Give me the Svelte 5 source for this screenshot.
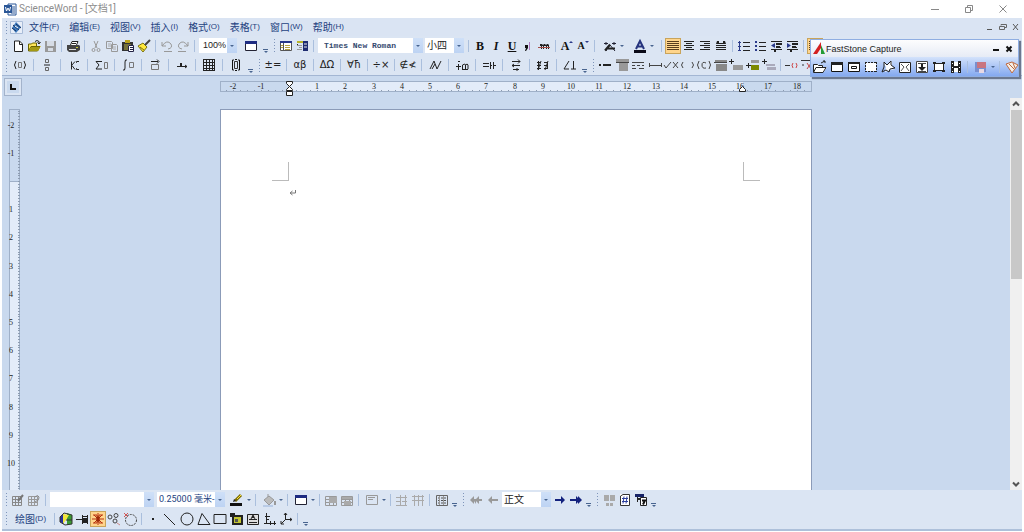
<script>
  const line = (d, c = "#222", w = 1) => `<path d="${d}" fill="none" stroke="${c}" stroke-width="${w}"/>`;
  const fill = (d, c = "#222") => `<path d="${d}" fill="${c}"/>`;
  const rows = (c, list) => list.map(([x, y, w]) => fill(`M${x} ${y}h${w}v1h-${w}z`, c)).join("");

  // 16x16 drawings, keyed by command name
  const icons = {
    new: fill("M4 3h6l3 3v8H4z", "#fff") + line("M4.500 3v10.500h8V6L9.500 3zM9.500 3v3.500h3"),
    open: fill("M2 13V6h3l1-1h5v3h4l-3 5z", "#ffe65a") + line("M2.500 13V6h3l1 -1h4v3M2.500 13L5 8.500h9L11.500 13z", "#6b6400") + fill("M3 13l2-4h9l-2 4z", "#a49a12") + line("M9 3.500q2-2 4 0v2M11.500 4.500l1.500 1.500L14.500 4", "#222"),
    save: fill("M3 3h11v11H3z", "#999") + fill("M5 3h7v5H5zM6 10h5v3H6z", "#d6dce5"),
    print: fill("M5 7l2-4h6l-1 4z", "#fff") + line("M5.500 7L7 3.500h6L11.500 7M7 5.500h4") + fill("M2 7h12l1 1v4l-3 2H4l-2-2z", "#444") + fill("M4 11h7v1H4z", "#ddd") + fill("M11 9h2v1h-2z", "#cc3"),
    cut: line("M6 3l3 7M10 3L7 10", "#999") + '<circle cx="5.500" cy="12" r="1.500" fill="none" stroke="#999"/><circle cx="10.500" cy="12" r="1.500" fill="none" stroke="#999"/>',
    copy: line("M2.500 3.500h5l1 1v6h-6zM7.500 6.500h5l1 1v6h-6z", "#999") + line("M4 6h3M4 8h3M9 9h3M9 11h3", "#aaa"),
    paste: fill("M2 4h11v9H2z", "#333") + fill("M5 2h5v3H5z", "#b9a31c") + fill("M4 6h7v6H4z", "#77733a") + fill("M8 7h6v7H8z", "#fff") + line("M8.500 7.500h5v6h-5zM10 9.500h3M10 11.500h3", "#224"),
    brush: fill("M2 8l5-3 4 4-4 5z", "#ffe83b") + line("M2 8l5-3 4 4-4 5zM4 9l4 3", "#7a7210") + line("M9 7l5-5", "#444", 2),
    undo: line("M3 4v4h4M3 8q5-7 9-2q2 4-3 5M5 13.500h8", "#999"),
    redo: line("M13 4v4H9M13 8Q8 1 4 6q-2 4 3 5M3 13.500h8", "#999"),
    table: fill("M2 3h12v10H2z", "#fff") + line("M2.500 3.500h11v9h-11z", "#223") + fill("M2 3h12v3H2z", "#1e2c82"),
    panel: fill("M2 3h12v10H2z", "#fff") + line("M2.500 3.500h11v9h-11z", "#555") + fill("M2 3h12v2H2z", "#26368a") + line("M5.500 5v8", "#555") + line("M3 7.500h2M3 9.500h2M7 7.500h5M7 9.500h5M7 11.500h5", "#b7a13e"),
    book: fill("M9 3h5v10H9z", "#1e2c70") + fill("M3 3h6v2H3z", "#b9b52c") + line("M10 6h3M10 9h3", "#eee") + line("M3 7.500h5M5 9.500h3M3 11.500h5", "#999") + fill("M3 6h1v1H3z"),
    strike: fill("M4 6h2l1 1 1-1h1l1 1 1-1h1l1 1v4h-1V8h-1v3h-1V8H8v3H7V8H6v3H5V8H4z") + line("M2 9.500h12", "#a65048"),
    comma: fill("M5 7h3v3l-2 3H5l1-3H5z", "#111") + line("M9.500 4v8", "#b07ac0"),
    effects: line("M4 13L8 7l5 6M2 5.500h4M4 4v3M10 5.500h4M12 4v3", "#223") + line("M3 12.500l5-6M6 10.500h7", "#222", 2),
    color: fill("M2 12h12v3H2z", "#0a0a18") + line("M4 11L8 3l4 8M6 8.500h5", "#26347e", 2),
    left: rows("#5a3d1d", [[2, 3, 12], [2, 5, 12], [2, 7, 12], [2, 9, 12], [2, 11, 12]]),
    center: rows("#222", [[3, 3, 10], [5, 5, 6], [3, 7, 10], [5, 9, 6], [3, 11, 10]]),
    right: rows("#222", [[3, 3, 10], [7, 5, 6], [3, 7, 10], [7, 9, 6], [3, 11, 10]]),
    spread: fill("M4 3h2v2h4V3h2l1 3H3z") + rows("#222", [[3, 7, 10], [3, 9, 10], [3, 11, 10]]),
    numlist: fill("M3 3h1v10H3zM2 4h3v1H2zM2 8h3v1H2zM2 12h3v1H2z", "#2a3a8a") + rows("#222", [[7, 4, 7], [7, 8, 7], [7, 12, 7]]),
    bullets: fill("M3 3h2v2H3zM3 7h2v2H3zM3 11h2v2H3z", "#2a3a8a") + rows("#222", [[7, 4, 7], [7, 8, 7], [7, 12, 7]]),
    outdent: rows("#222", [[3, 3, 11], [8, 5, 6], [8, 6, 6], [8, 8, 4], [8, 9, 5], [3, 11, 11]]) + fill("M7 5v5L3 7.500z", "#2a3a8a") + fill("M6 12h2v2H6z"),
    indent: rows("#222", [[3, 3, 11], [8, 5, 6], [8, 6, 6], [8, 8, 4], [8, 9, 5], [3, 11, 11]]) + fill("M3 5v5l4-2.500z", "#2a3a8a") + fill("M6 12h2v2H6z"),
    paren: line("M4 4q-3 4 0 8M12 4q3 4 0 8") + line("M6.500 5.500h3v5h-3z", "#777"),
    frac: line("M6.500 2.500h3v3h-3zM6.500 10.500h3v3h-3z", "#666") + line("M5 8h6", "#222"),
    script: line("M5.500 4.500v8M5.500 8.500L9 4.500M6 8.500l3 4M11 4.500h2M11 12.500h2", "#222") + line("M10.500 4v2M10.500 11v2", "#555"),
    sum: line("M9 4.500H3L6 8 3 12h6", "#222") + line("M11.500 5.500h3v6h-3z", "#777"),
    integral: line("M7 3Q5 2 5 5v6q0 3-2 2") + line("M9.500 5.500h4v5h-4z", "#777"),
    vector: line("M4 4.500h7M10 2.500l2 2-2 2") + line("M4.500 7.500h7v5h-7z", "#777"),
    arrow: line("M3 9.500h10M11 8l2 1.500L11 11", "#222") + fill("M6 6h2v3H6z"),
    matrix: line("M2.500 2v12M5.500 2v12M8.500 2v12M11.500 2v12M13.500 2v12M2 2.500h12M2 5.500h12M2 8.500h12M2 11.500h12M2 13.500h12", "#222"),
    bracket: line("M6 3H4.500v10H6M10 3h1.500v10H10", "#111") + line("M6.500 4.500h3v7h-3z", "#333") + line("M7 2.500h2M7 13.500h2", "#111"),
    wave: line("M3 12L7 4M7 4l3 8 4-8M5 12l3-5"),
    dotplus: line("M2 9.500h5M4.500 7v6M8.500 12V8q3-2 3 0v4M11.500 8q2-2 2.500 0v4M8 12.500h6") + fill("M4 4h2v1H4z"),
    relate: line("M2 6.500h6M2 9.500h6M9.500 5v7M12.500 5v7M12 8.500h3M9 8.500h2"),
    turn: line("M4 4.500h8M10 2.500l2 2-2 2M4 8.500h8M6 7L4 8.500 6 10M5 12.500h6M9 11v3"),
    negate: line("M2 5.500h4M2 8.500h4M2 11.500h4M3.500 4v9M6 4l-3 9M9 5.500h4M9 8.500h4M9 11.500h4M12.500 5v7M13 4l-3 9"),
    angle: line("M7 4L2 12h5M11.500 4v8M9 12h5"),
    dot1: fill("M2 7h2v2H2zM6 7h8v2H6z"),
    lines1: fill("M2 2h13v3H2zM5 6h9v8H5z", "#999") + line("M2 5.500h13", "#444"),
    dashes: line("M2 5.500h12M2 8.500h3M7 8.500h3M12 8.500h2M2 11.500h4M9 11.500h5", "#444"),
    ruleh: line("M2.500 6v4M14.500 6v4M3 8.500h11", "#444"),
    checkx: line("M1 8l2 3 5-6M10 5l5 6M15 5l-5 6", "#444"),
    gap: line("M4 5q-3 3 0 6M13 5q3 3 0 6", "#444"),
    gapc: line("M3 4q-3 4 0 8M13 4q3 4 0 8M10 6Q6 4 6 8t4 3", "#444"),
    block: fill("M3 3h12v2H3zM4 7h11v7H4z", "#888") + line("M2 5.500h13", "#444"),
    plus1: fill("M5 8h10v5H5z", "#999") + line("M1 4.500h5M3.500 2v5"),
    plus2: fill("M6 3h8v3H6z", "#999") + fill("M6 8h8v5H6z", "#7d8a00") + line("M1 8.500h5M3.500 6v5"),
    plus3: fill("M5 7h9v2H5zM6 10h9v3H6z", "#aab") + line("M1 4.500h5M3.500 2v5"),
    minus: line("M1 8.500h5", "#333") + line("M9 6q-2 2 0 5M12 6q2 2 0 5", "#c44"),
    formula: line("M1 3.500h13M2 8h2", "#333") + line("M7 6l4 6M11 6l-4 6", "#c24a4a"),
    sheet: line("M2.500 4.500h9v9h-9zM2 7.500h10M2 10.500h10M5.500 4v10M8.500 4v10", "#888") + line("M8 9l5-6", "#777", 2),
    sheet2: line("M2.500 4.500h9v9h-9zM2 7.500h10M2 10.500h10M5.500 4v10M8.500 4v10", "#999") + line("M9 5q3-3 4 0t-4 5", "#888"),
    pen: fill("M1 11h12v3H1z", "#111") + line("M6 9l6-6", "#7a6b00", 3) + line("M8 7l4-4", "#ffe23b", 1) + fill("M4 10l1-3 2 2z"),
    bucket: fill("M3 8l5-4 5 4-5 5z", "#bbb") + line("M3 8l5-4 5 4-5 5zM7 5V2", "#999") + fill("M13 9h2v4h-2z", "#999") + fill("M2 13h10v2H2z", "#b9cbe6"),
    grid1: line("M2.500 4.500h11v9h-11zM2 7.500h12M2 10.500h12M6.500 4v10M10.500 4v10", "#999") + fill("M6 5h8v6H6z", "#aaa"),
    grid2: line("M2.500 4.500h11v9h-11zM2 7.500h12M2 10.500h12M6.500 4v10M10.500 4v10", "#999") + fill("M3 5h10v2H3zM5 9h7v4H5z", "#aaa"),
    frame: line("M2.500 3.500h11v9h-11z", "#999") + line("M4 5.500h7M4 7.500h5", "#999"),
    split: line("M2 5.500h11M2 9.500h4M8 9.500h5M2 13.500h11M6.500 3v11M11.500 3v11", "#aaa"),
    split2: line("M2 4.500h12M2 8.500h12M4.500 3v11M8.500 3v11M12.500 3v11", "#aaa"),
    dotgrid: line("M2.500 3.500h11v10h-11z", "#666") + '<path d="M4 6h9M4 8.500h9M4 11h9" stroke="#555" stroke-dasharray="2 1"/>' + line("M5.500 4v9M9.500 4v9", "#999"),
    back2: fill("M2 8l4-4v3h2V4L8 7l3-3v3h3v2h-3v3L8 9v3L6 9v3z", "#999"),
    back1: fill("M3 8l4-4v3h6v2H7v3z", "#999"),
    next1: fill("M13 8L9 4v3H3v2h6v3z", "#14227e"),
    next2: fill("M14 8l-4-4v2L8 4v3H2v2h6v3l2-2v2z", "#14227e"),
    link: fill("M3 3h5v6H3zM9 3h5v6H9zM5 11h3v3H5zM9 11h3v3H9z", "#aaa"),
    hash: fill("M3 2h8l2 2v10H3z", "#fff") + line("M3.500 4L6 2.500h6.500v11h-9z", "#333") + line("M5 6.500h6M5 9.500h6M7 4.500l-1 7M10 4.500l-1 7", "#2c3f9e"),
    order: fill("M2 2h9v3H2z", "#152266") + fill("M7 5h7v9H7z", "#fff") + line("M7.500 5.500h6v8h-6zM4.500 5v5") + line("M9 8.500h3l-2 4", "#111", 2) + fill("M5 6h3v2H5z"),
    tile: fill("M2 6l4-4v11l-4-2z", "#28309b") + fill("M9 2l5 2v9l-5 1z", "#3b9a32") + fill("M5 3l6 1-3 5-3 4z", "#f3e73a") + line("M2 6l4-4 8 2v9l-7 1-5-3zM8 9h6", "#333"),
    anchor: line("M2 8.500h6M8.500 4v9M9 5.500h4M9 11.500h4M13.500 4v9", "#222") + fill("M9 7h5v4H9z", "#222"),
    snap: line("M8 2v12M2 8h12M3 4h4v3M13 4H9v3M3 12h4V9M13 12H9V9M4 4l8 8M12 4l-8 8", "#b8330f") + line("M7 6h2v4H7z", "#8c1c00"),
    nodes: '<g fill="none" stroke="#444"><circle cx="4" cy="6" r="2"/><circle cx="10" cy="4.500" r="2"/><circle cx="9" cy="10" r="2"/></g>' + line("M11 12l3 2", "#c88"),
    rotate: '<circle cx="9" cy="9" r="5.500" fill="none" stroke="#444" stroke-dasharray="2 1"/>' + line("M2 2l4 4M6 2L2 6", "#c55"),
    point: fill("M7 7h2v2H7z"),
    line: line("M2 3l11 11"),
    circle: '<circle cx="8" cy="8" r="6" fill="none" stroke="#222"/>',
    triangle: line("M6 2.500L2 13.500h12z"),
    rect: line("M2 3.500h12v9H2z"),
    picture: fill("M3 4h11v10H3z") + fill("M5 6h7v6H5z", "#c2c531") + fill("M6 8h3v3H6z", "#555") + fill("M1 2h5v3H4v1H1z"),
    text: fill("M2 3h12v11H2z", "#ddd") + line("M2.500 3.500h11v10h-11zM4 8.500h8M4 11.500h8M6 8l2-4 2 4") + fill("M7 5h2v2H7z"),
    axis: line("M4.500 2v11M2 12.500h12M3 5.500h5M4 8.500h3M8.500 10v4M12.500 10v4"),
    axis3: line("M7.500 2v7M7 8.500h7M7.500 8.500L3 13M6 4l1.500-2L9 4M12 7l2 1.500-2 1.500M3 10v3h3"),
    // capture bar
    capopen: fill("M2 13V5h4l1 1h4v2h4l-3 5z", "#fff") + line("M1.500 13V5.500h4l1 1h4V8M1.500 13.500L4 8.500h10l-3 5zM9 4l4-2M11 2h2v2"),
    capwin: fill("M2 3h12v10H2z", "#fff") + line("M2.500 3.500h11v9h-11zM2 5h12", "#111") + fill("M2 3h12v3H2z"),
    capobj: fill("M2 3h12v10H2z", "#fff") + line("M2.500 3.500h11v9h-11zM5.500 7.500h5v2h-5z", "#111") + fill("M2 3h12v2H2z"),
    caprect: fill("M3 4h10v8H3z", "#fff") + '<path d="M2 3.500h12M2 12.500h12M2.500 3v10M13.500 3v10" fill="none" stroke="#222" stroke-dasharray="2 1"/>',
    capfree: fill("M3 3l4 3 5-4v5l3 3-5 1-5 2 1-5z", "#fff") + line("M4 3l3 3 4-4v4l4 3-5 1-1 3-3-2-4 2 2-5z"),
    capfull: fill("M2 3h12v11H2z", "#fff") + line("M2.500 3.500h11v10h-11z") + line("M4 5l3 3-3 4M12 5L9 8l3 4", "#555"),
    capscroll: fill("M2 2h12v12H2z", "#fff") + line("M2.500 2.500h11v11h-11zM4 4.500h8M4 12.500h8", "#444") + fill("M7 5h2v3h3l-4 4-4-4h3z"),
    capfix: fill("M4 5h8v6H4z", "#fff") + line("M3.500 4.500h9v7h-9z", "#222") + fill("M2 3h3v2H2zM11 3h3v2h-3zM2 11h3v2H2zM11 11h3v2h-3z"),
    capfilm: fill("M3 2h3v12H3zM10 2h3v12h-3zM6 7h4v2H6z") + fill("M6 3h4v4H6zM6 9h4v4H6zM4 4h1v1H4zM4 8h1v1H4zM4 12h1v1H4zM11 4h1v1h-1zM11 8h1v1h-1zM11 12h1v1h-1z", "#fff"),
    capsave: fill("M2 3h11v10H2z", "#7a8fce") + fill("M4 3h9v6H4z", "#c97580") + fill("M6 10h5v4H6z", "#e8d9e4"),
    capset: fill("M2 5l6-2 6 3-6 8z", "#f4efe9") + line("M2 5l6-2 6 3-6 8zM5 5l5 5M9 4l2 5", "#c0683c")
  };

  // commands drawn with characters instead of a picture
  const glyphs = {
    bold: "B", italic: "I", underline: "U", grow: "A", shrink: "A",
    plusminus: "±=", greek: "αβ", greekcap: "ΔΩ", forall: "∀ħ", divide: "÷×", notin: "∉≮"
  };

  const combos = {
    zoom: { label: "显示比例", width: 38, value: "100%" },
    font: { label: "字体", width: 105, value: "Times New Roman" },
    size: { label: "字号", width: 39, value: "小四" },
    style: { label: "线型", width: 104, value: "" },
    weight: { label: "线宽", width: 68, value: "0.25000 毫米-" },
    part: { label: "样式", width: 49, value: "正文" }
  };

  // "|" separator, ":" grip, "v" overflow mark, "$" combo box,
  // "+" drop-down arrow, "=" roomy drop-down, "*" pressed, "~" wide cell, "^" equation cell
  const parse = (text) =>
    text.split(" ").map((token) => ({
      token,
      name: token.replace(/[$+=*~^]/g, ""),
      combo: token[0] === "$",
      drop: /[+=]/.test(token),
      roomy: token.includes("="),
      active: token.includes("*"),
      mid: token.includes("~"),
      wide: token.includes("^")
    }));

  const standard = parse(": new open save | print | cut copy paste brush | undo redo | $zoom table^ v : panel book | $font $size | bold italic underline comma strike | grow shrink | effects= color= | left* center right spread | numlist bullets outdent indent | left*");
  const equation = parse(": paren^ | frac^ | script^ | sum^ | integral^ | vector^ | arrow^ | matrix^ | bracket^ v : plusminus^ | greek^ | greekcap^ | forall^ | divide^ | notin^ | wave^ | dotplus^ | relate^ | turn^ | negate^ | angle^ v : dot1 lines1~ dashes ruleh~ checkx gap gapc~ block plus1 plus2~ plus3 | minus formula");
  const tables = parse(": sheet sheet2 | $style $weight pen+ | bucket+ | table+ | grid1 grid2 | frame+ | split split2 | dotgrid~ v : back2~ back1~ $part next1 next2 v : link hash order v");
  const drawing = parse("| tile anchor snap* nodes rotate | point line~ circle~ triangle~ rect picture~ text axis~ axis3 | v");
  const capture = parse("capopen~ capwin~ capobj~ caprect~ capfree~ capfull~ capscroll~ capfix~ capfilm~ | capsave+ | capset~");

  const menus = [
    ["文件", "F"], ["编辑", "E"], ["视图", "V"], ["插入", "I"],
    ["格式", "O"], ["表格", "T"], ["窗口", "W"], ["帮助", "H"]
  ];

  let winHeight = $state(532);

  // rulers: one centimetre, in pixels
  const CM = 28.2;
  const at = (n, margin) => Math.round(margin + n * CM);
  const range = (from, count) => Array.from({ length: count }, (_, i) => from + i);

  const hMarks = range(-2, 21).filter((n) => n !== 0);
  const hTicks = range(-9, 83).map((n) => n / 4);
  // the vertical scale numbers only what fits above the footer
  let vLength = $derived(Math.max(winHeight - 151, 80));
  let vMarks = $derived(range(-2, 60).filter((n) => n !== 0 && at(n, 72) < vLength - 6));
  let vTicks = $derived(range(-25, 600).map((n) => n / 10).filter((n) => at(n, 72) < vLength));
</script>

<svelte:window bind:innerHeight={winHeight} />

{#snippet bar(items)}
  {#each items as item}
    {#if item.token === "|"}
      <span class="sep"></span>
    {:else if item.token === ":"}
      <span class="grip"></span>
    {:else if item.token === "v"}
      <button class="more" aria-label="更多"><i></i><b class="tri"></b></button>
    {:else if item.combo}
      <span class="combo {item.name}" style:width="{combos[item.name].width}px">
        <select aria-label={combos[item.name].label}>
          <option>{combos[item.name].value}</option>
        </select>
        <b class="tri"></b>
      </span>
    {:else}
      <button
        class="tool"
        class:drop={item.drop}
        class:roomy={item.roomy}
        class:active={item.active}
        class:mid={item.mid}
        class:wide={item.wide}
        aria-label={item.name}
      >
        {#if glyphs[item.name]}
          <span class="glyph {item.name}">{glyphs[item.name]}</span>
        {:else}
          <svg width="16" height="16" viewBox="0 0 16 16">{@html icons[item.name]}</svg>
        {/if}
        {#if item.drop}<b class="tri"></b>{/if}
      </button>
    {/if}
  {/each}
{/snippet}

<div class="app">
  <header class="title">
    <svg width="13" height="13" viewBox="0 0 13 13">
      <path d="M4 1h8v11H4z" fill="#fff" stroke="#2b5797" />
      <path d="M7 4h4M7 6h4M7 8h4M7 10h4" stroke="#2b5797" />
      <path d="M0 2h8v8H0z" fill="#2b5797" />
      <path d="M1.500 4l1 4L4 5l1.500 3 1-4" fill="none" stroke="#fff" />
    </svg>
    <h1>ScienceWord - [文档1]</h1>
    <div class="winbtns">
      <button aria-label="最小化"><svg width="10" height="10"><path d="M1 5.500h8" stroke="#888" /></svg></button>
      <button aria-label="还原"><svg width="10" height="10"><path d="M1.500 3.500h5v5h-5zM3.500 3V1.500h5v5H7" fill="none" stroke="#888" /></svg></button>
      <button aria-label="关闭"><svg width="10" height="10"><path d="M1.500 1.500l7 7M8.500 1.500l-7 7" stroke="#888" /></svg></button>
    </div>
  </header>

  <nav class="menu">
    <span class="grip"></span>
    <svg width="13" height="13" viewBox="0 0 13 13">
      <path d="M.5.500h12v12H.5z" fill="#e8eef8" stroke="#a9bcd8" />
      <path d="M6 1l5 5-5 6-4-5z" fill="#3c78bd" />
      <path d="M3 4l6 5M6 3l5 4M2 7l4 3" stroke="#16345f" />
      <path d="M5 5l3 2" stroke="#fff" />
    </svg>
    {#each menus as [name, key]}
      <button>{name}<small>({key})</small></button>
    {/each}
    <div class="docbtns">
      <button aria-label="最小化文档"><svg width="8" height="8"><path d="M1 6.500h5" stroke="#555" /></svg></button>
      <button aria-label="还原文档"><svg width="8" height="8"><path d="M.5 3.500h5v3h-5zM2 2.500V1.500h5.500v3H6" fill="none" stroke="#666" /></svg></button>
      <button aria-label="关闭文档"><svg width="8" height="8"><path d="M1 1l5 6M6 1L1 7" stroke="#555" /></svg></button>
    </div>
  </nav>

  <div class="toolbar">{@render bar(standard)}</div>
  <div class="toolbar last">{@render bar(equation)}</div>

  <main>
    <div class="side">
      <button class="tab" aria-label="制表位"><svg width="8" height="8"><path d="M2 1v5h5" fill="none" stroke="#111" stroke-width="2" /></svg></button>
      <svg class="vruler" width="20" height={vLength}>
        <rect x="7.500" y="0.500" width="10" height={vLength} fill="#c9d9ee" stroke="#9fb0c8" />
        <rect x="8" y="72" width="9" height={vLength} fill="#e3ecf9" />
        <path d="M8 72.500h9" stroke="#9fb0c8" />
        {#each vTicks as n}
          <path d="M16 {at(n, 72) + 0.5}H18" stroke="#8c9bb0" />
        {/each}
        {#each vMarks as n}
          <text x="9" y={at(n, 72) + 3}>{n}</text>
        {/each}
      </svg>
    </div>

    <div class="desk">
      <svg class="hruler" width="592" height="16">
        <rect x="0.500" y="0.500" width="591" height="10" fill="#c9d9ee" stroke="#9fb0c8" />
        <rect x="69" y="1" width="454" height="9" fill="#e3ecf9" />
        {#each hTicks as n}
          <path d="M{at(n, 69) + 0.5} 9v1" stroke="#8c9bb0" />
        {/each}
        {#each hMarks as n}
          <text x={at(n, 69)} y="8">{n}</text>
        {/each}
        <path d="M66.500.500h6v2l-3 3 3 3v1h-6v-1l3-3-3-3zM66.500 10.500h6v4h-6z" fill="#fff" stroke="#222" />
        <path d="M519.500 10.500v-2l3-3 3 3v2z" fill="#fff" stroke="#222" />
      </svg>
      <article class="paper">
        <div class="corners"><i class="tl"></i><i class="tr"></i></div>
        <p><svg width="7" height="7"><path d="M6.500 1v3h-5M3.500 2L1 4l2.500 2" fill="none" stroke="#777" /></svg></p>
      </article>
    </div>

    <div class="scroll">
      <button aria-label="向上滚动"><svg width="8" height="6"><path d="M1 4.500l3-3 3 3" fill="none" stroke="#555" stroke-width="2" /></svg></button>
      <i class="thumb"></i>
      <button aria-label="向下滚动"><svg width="8" height="6"><path d="M1 1.500l3 3 3-3" fill="none" stroke="#555" stroke-width="2" /></svg></button>
    </div>
  </main>

  <footer>
    <div class="toolbar">{@render bar(tables)}</div>
    <div class="toolbar">
      <span class="grip"></span>
      <button class="draw">绘图<small>(D)</small></button>
      {@render bar(drawing)}
    </div>
  </footer>

  <section class="capture">
    <header>
      <svg width="14" height="13"><path d="M1 12L9 0v6l-4 6z" fill="#d32020" /><path d="M9 3l4 9H9z" fill="#239b36" /></svg>
      <h2>FastStone Capture</h2>
      <button aria-label="最小化截图栏"><svg width="8" height="8"><path d="M1 5h6" stroke="#111" stroke-width="2" /></svg></button>
      <button aria-label="关闭截图栏"><svg width="8" height="8"><path d="M1.500 1.500l5 5M6.500 1.500l-5 5" stroke="#111" stroke-width="2" /></svg></button>
    </header>
    <div class="capbar">{@render bar(capture)}</div>
  </section>
</div>

<style>
  :global(body) {
    margin: 0;
    background: #fff;
  }

  .app {
    position: relative;
    box-sizing: border-box;
    height: 100vh;
    min-height: 240px;
    padding: 0 2px 1px;
    display: flex;
    flex-direction: column;
    overflow: hidden;
    font: 10px/14px "Open Sans", "Noto Sans CJK SC", sans-serif;
    color: #1f3564;
  }

  button {
    display: flex;
    align-items: center;
    justify-content: center;
    flex: none;
    padding: 0;
    border: 0;
    background: none;
    color: inherit;
    font: inherit;
    white-space: nowrap;
  }

  svg {
    display: block;
    flex: none;
  }

  h1, h2 {
    margin: 0;
    font-weight: 400;
  }

  .title {
    display: flex;
    align-items: center;
    flex: none;
    height: 18px;
    padding: 0 2px;
    background: #fff;
  }

  h1 {
    margin-left: 2px;
    font: 10px/14px Roboto, "Noto Sans CJK SC", sans-serif;
    color: #8d8d8d;
  }

  .winbtns {
    display: flex;
    margin-left: auto;
  }

  .winbtns button {
    width: 34px;
    height: 18px;
  }

  .menu {
    display: flex;
    align-items: center;
    flex: none;
    height: 18px;
    background: #dae4f3;
  }

  .menu > button {
    margin-left: 1px;
    padding: 0 4px 0 5px;
    font-family: "Noto Sans CJK SC", sans-serif;
    color: #24427f;
  }

  small {
    font: 8px/14px "Liberation Sans", sans-serif;
  }

  .docbtns {
    display: flex;
    gap: 5px;
    margin-left: auto;
    padding-right: 2px;
  }

  .toolbar {
    display: flex;
    align-items: center;
    flex: none;
    height: 19px;
    background: #dbe5f3;
    overflow: hidden;
  }

  .toolbar.last {
    height: 20px;
    border-bottom: 1px solid #a3b6d3;
  }

  .grip {
    flex: none;
    width: 8px;
    height: 13px;
    background: linear-gradient(#7f95ba 1px, transparent 1px) 4px 0 / 1px 3px repeat-y;
  }

  .sep {
    flex: none;
    width: 1px;
    height: 12px;
    margin: 0 3px;
    background: #aabfdd;
  }

  .tool {
    width: 16px;
    height: 16px;
  }

  .tool.mid {
    width: 17px;
  }

  .tool.wide {
    width: 20px;
  }

  .tool.drop {
    width: 25px;
    gap: 2px;
  }

  .tool.roomy {
    width: 30px;
  }

  .tool.active {
    background: #ffd58c;
    box-shadow: inset 0 0 0 1px #c9a45b;
  }

  .tri {
    flex: none;
    border: 2px solid transparent;
    border-top-color: #48648f;
    border-bottom: 0;
  }

  .more {
    flex-direction: column;
    gap: 1px;
    width: 9px;
    align-self: flex-end;
    padding-bottom: 2px;
  }

  .more i {
    width: 5px;
    height: 1px;
    background: #48648f;
  }

  .glyph {
    font: 10px/16px "DejaVu Sans", sans-serif;
    color: #222;
  }

  .bold, .italic, .underline, .grow, .shrink {
    font: bold 12px/16px "Liberation Serif", serif;
    color: #111;
  }

  .italic {
    font-style: italic;
  }

  .underline {
    text-decoration: underline;
  }

  .shrink {
    font-size: 10px;
  }

  .grow, .shrink {
    display: flex;
    align-items: center;
  }

  .grow::after, .shrink::after {
    content: "";
    margin-bottom: 8px;
    border: 2px solid transparent;
    border-bottom-color: #2a3a8a;
    border-top: 0;
  }

  .shrink::after {
    border: 2px solid transparent;
    border-top-color: #2a3a8a;
    border-bottom: 0;
  }

  .combo {
    position: relative;
    flex: none;
    height: 15px;
    margin: 0 1px;
    background: #fff;
  }

  .combo.zoom {
    margin-right: 4px;
  }

  .combo.weight {
    margin-right: 2px;
    margin-left: 2px;
  }

  .combo select {
    display: block;
    width: 100%;
    height: 15px;
    padding: 0 10px 0 4px;
    border: 0;
    appearance: none;
    background: linear-gradient(#cfe0f8, #bdd3f3) right / 10px 100% no-repeat;
    color: #222;
    font: 10px/15px "Open Sans", "Noto Sans CJK SC", sans-serif;
  }

  .combo.zoom select {
    padding-right: 0;
    font: 9px/15px "Liberation Sans", sans-serif;
  }

  .combo.font select {
    padding-left: 6px;
    font: bold 8px/15px "Liberation Mono", monospace;
    color: #34496f;
  }

  .combo.size select, .combo.part select {
    padding-left: 2px;
  }

  .combo.weight select {
    padding-right: 0;
    padding-left: 2px;
    font: 9px/15px Roboto, "Noto Sans CJK SC", sans-serif;
    color: #24427f;
  }

  .combo .tri {
    position: absolute;
    right: 3px;
    top: 7px;
    pointer-events: none;
  }

  main {
    display: flex;
    flex: 1;
    min-height: 0;
    background: #c9d9ee;
    overflow: hidden;
  }

  .side {
    display: flex;
    flex-direction: column;
    flex: none;
    width: 20px;
  }

  .tab {
    width: 18px;
    height: 18px;
    margin: 2px 0 13px 2px;
    border: 1px solid #a3b3cb;
    box-shadow: inset 0 0 0 2px #dbe5f3;
  }

  text {
    font: 8px "Liberation Serif", serif;
    fill: #222;
    text-anchor: middle;
  }

  .desk {
    display: flex;
    flex-direction: column;
    align-items: center;
    flex: 1;
    min-width: 0;
    padding-top: 5px;
    overflow: hidden;
  }

  .paper {
    box-sizing: border-box;
    flex: none;
    width: 592px;
    height: 842px;
    margin-top: 12px;
    padding: 52px 51px;
    border: 1px solid #8b9bb8;
    background: #fff;
  }

  .corners {
    display: flex;
    justify-content: space-between;
  }

  .tl, .tr {
    width: 16px;
    height: 18px;
    border-bottom: 1px solid #bbb;
  }

  .tl {
    border-right: 1px solid #bbb;
  }

  .tr {
    border-left: 1px solid #bbb;
  }

  .paper p {
    margin: 8px 0 0 17px;
  }

  .scroll {
    display: flex;
    flex-direction: column;
    flex: none;
    width: 12px;
    margin-top: 22px;
    background: #f0f0f0;
  }

  .scroll button {
    width: 12px;
    height: 12px;
  }

  .thumb {
    width: 11px;
    height: 43%;
    margin-bottom: auto;
    align-self: center;
    background: #c8c8c8;
  }

  footer {
    flex: none;
    padding-bottom: 1px;
    border-bottom: 2px solid #adc0da;
    background: #dbe5f3;
  }

  .draw {
    width: 41px;
    font-family: "Noto Sans CJK SC", sans-serif;
    color: #24427f;
  }

  /* floating capture window */
  .capture {
    position: absolute;
    top: 39px;
    right: 5px;
    box-sizing: border-box;
    width: 209px;
    border: 1px solid #8faee2;
    box-shadow: 2px 2px 1px #6b7890;
    background: #f4f7fd;
  }

  .capture header {
    display: flex;
    align-items: center;
    height: 17px;
    padding: 0 3px 0 1px;
    background: linear-gradient(#fdfdfe, #e6ebf5);
  }

  .capture h2 {
    flex: 1;
    font: 9px/14px "Liberation Sans", sans-serif;
    color: #222;
  }

  .capture header button {
    width: 13px;
  }

  .capbar {
    display: flex;
    align-items: center;
    height: 19px;
    background: linear-gradient(#d3e2fb, #84a9f0);
  }
</style>
